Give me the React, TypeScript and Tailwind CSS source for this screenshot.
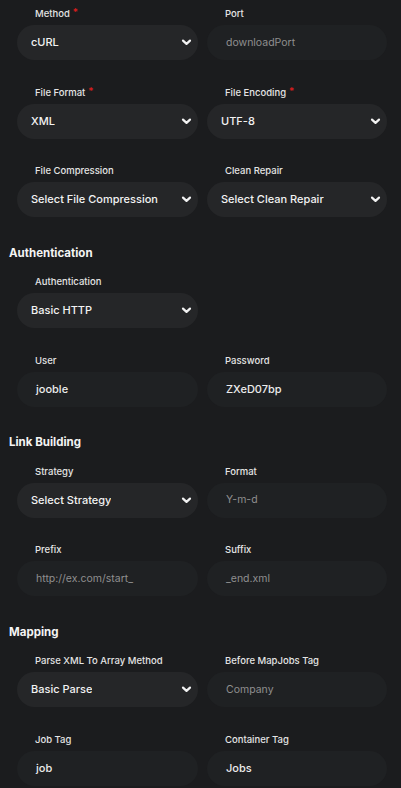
import React from "react";

type FieldDef = {
  label: string;
  kind: "select" | "input";
  value?: string;
  placeholder?: string;
  required?: boolean;
};

type Row = [FieldDef, FieldDef | null];

type Section = { title?: string; rows: Row[] };

const sections: Section[] = [
  {
    rows: [
      [
        { label: "Method", kind: "select", value: "cURL", required: true },
        { label: "Port", kind: "input", placeholder: "downloadPort" },
      ],
      [
        { label: "File Format", kind: "select", value: "XML", required: true },
        { label: "File Encoding", kind: "select", value: "UTF-8", required: true },
      ],
      [
        { label: "File Compression", kind: "select", value: "Select File Compression" },
        { label: "Clean Repair", kind: "select", value: "Select Clean Repair" },
      ],
    ],
  },
  {
    title: "Authentication",
    rows: [
      [{ label: "Authentication", kind: "select", value: "Basic HTTP" }, null],
      [
        { label: "User", kind: "input", value: "jooble" },
        { label: "Password", kind: "input", value: "ZXeD07bp" },
      ],
    ],
  },
  {
    title: "Link Building",
    rows: [
      [
        { label: "Strategy", kind: "select", value: "Select Strategy" },
        { label: "Format", kind: "input", placeholder: "Y-m-d" },
      ],
      [
        { label: "Prefix", kind: "input", placeholder: "http://ex.com/start_" },
        { label: "Suffix", kind: "input", placeholder: "_end.xml" },
      ],
    ],
  },
  {
    title: "Mapping",
    rows: [
      [
        { label: "Parse XML To Array Method", kind: "select", value: "Basic Parse" },
        { label: "Before MapJobs Tag", kind: "input", placeholder: "Company" },
      ],
      [
        { label: "Job Tag", kind: "input", value: "job" },
        { label: "Container Tag", kind: "input", value: "Jobs" },
      ],
    ],
  },
];

function Chevron() {
  return (
    <svg width="11" height="7" viewBox="0 0 11 7" className="shrink-0">
      <polyline
        points="2,1.6 5.5,4.9 9,1.6"
        fill="none"
        stroke="#f2f2f2"
        strokeWidth="2.2"
        strokeLinecap="round"
        strokeLinejoin="round"
      />
    </svg>
  );
}

function Field({ f }: { f: FieldDef }) {
  return (
    <div className="flex flex-col">
      <div className="h-[14px] pl-[18px] flex items-center text-[9.5px] font-medium text-[#e4e4e4] leading-none">
        {f.label}
        {f.required && <span className="ml-[3px] text-[#e11d1d] -mt-[4px] text-[10px]">*</span>}
      </div>
      {f.kind === "select" ? (
        <div className="mt-[4px] h-[35px] rounded-full bg-[#252628] flex items-center justify-between pl-[14px] pr-[6px]">
          <span className="text-[11px] font-medium text-[#f2f2f2] truncate">{f.value}</span>
          <Chevron />
        </div>
      ) : (
        <div className="mt-[4px] h-[35px] rounded-full bg-[#1f2123] flex items-center pl-[19px] pr-[10px]">
          {f.value ? (
            <span className="text-[11px] font-medium text-[#ececec]">{f.value}</span>
          ) : (
            <span className="text-[10.5px] text-[#8f8f8f]">{f.placeholder}</span>
          )}
        </div>
      )}
    </div>
  );
}

export default function App() {
  return (
    <div
      className="w-full min-h-screen bg-[#1b1c1e] pt-[7px] overflow-hidden"
      style={{ fontFamily: "Inter, 'Noto Sans', sans-serif" }}
    >
      {sections.map((s, i) => (
        <div key={i}>
          {s.title && (
            <div className="pt-[3px] mb-[13.5px] pl-[9px]">
              <div className="h-[16px] flex items-center text-[11.5px] font-bold text-[#f4f4f4]">
                {s.title}
              </div>
            </div>
          )}
          {s.rows.map((r, j) => (
            <div key={j} className="grid grid-cols-[181px_180px] gap-x-[9px] pl-[17px] mb-[25.5px]">
              <Field f={r[0]} />
              {r[1] ? <Field f={r[1]} /> : <div />}
            </div>
          ))}
        </div>
      ))}
    </div>
  );
}
